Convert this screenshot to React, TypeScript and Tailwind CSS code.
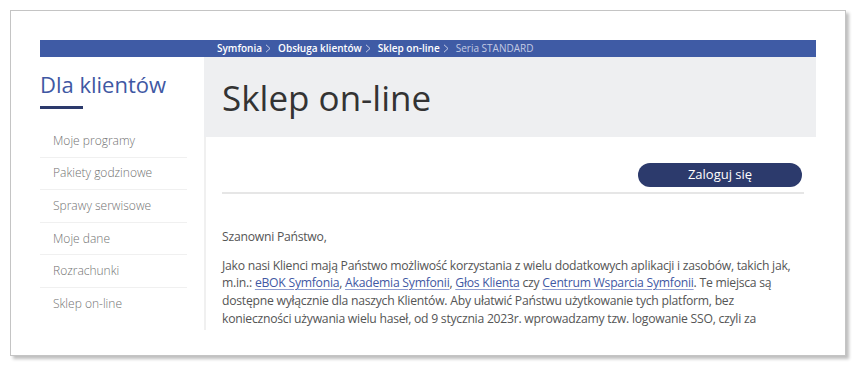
const menu = [
  "Moje programy",
  "Pakiety godzinowe",
  "Sprawy serwisowe",
  "Moje dane",
  "Rozrachunki",
  "Sklep on-line",
];

const Chevron = () => (
  <svg width="6" height="9" viewBox="0 0 6 9" className="ml-[3px] mr-[7px] shrink-0">
    <polyline points="1,0.8 5,4.5 1,8.2" fill="none" stroke="#d5daee" strokeWidth="0.9" />
  </svg>
);

const Crumb = ({ label, last }: { label: string; last?: boolean }) => (
  <span className="flex items-center">
    <span className={last ? "text-[#c3cae3]" : "font-semibold text-white"}>{label}</span>
    {!last && <Chevron />}
  </span>
);

const A = ({ children }: { children: string }) => (
  <a className="text-[#3f58a3] underline decoration-[#8d9bd0] underline-offset-2">{children}</a>
);

export default function App() {
  return (
    <div className="w-[856px] h-[370px] bg-white font-['Open_Sans',sans-serif] pt-[10px] pl-[10px]">
      <div className="w-[836px] h-[346px] border border-[#c4c4c4] shadow-[3px_3px_3px_rgba(0,0,0,0.25)] bg-white pt-[29px] pl-[29px]">
        <div className="w-[776px] h-[290px] overflow-hidden flex flex-col">
          <div className="h-[17px] shrink-0 bg-[#3f5ba5] flex items-center pl-[177px] text-[10px] leading-[17px] whitespace-nowrap">
            <Crumb label="Symfonia" />
            <Crumb label="Obsługa klientów" />
            <Crumb label="Sklep on-line" />
            <Crumb label="Seria STANDARD" last />
          </div>
          <div className="flex flex-1 min-h-0">
            <aside className="w-[164px] shrink-0 pt-[12px]">
              <h2 className="text-[22px] leading-[30px] text-[#3f58a3] whitespace-nowrap">Dla klientów</h2>
              <div className="w-[43px] h-[3px] bg-[#2c3a6c] mt-[7px]" />
              <ul className="mt-[16px] w-[147px]">
                {menu.map((m, i) => (
                  <li
                    key={m}
                    className={`h-[32.6px] flex items-center pl-[13px] text-[12px] font-light text-[#727272] ${i < menu.length - 1 ? "border-b border-[#f0f0f0]" : ""}`}
                  >
                    {m}
                  </li>
                ))}
              </ul>
            </aside>
            <main className="flex-1 flex flex-col">
              <div className="h-[80px] shrink-0 bg-[#eeeff1] pl-[18px] flex items-center">
                <h1 className="text-[35px] leading-none text-[#333]">Sklep on-line</h1>
              </div>
              <div className="flex-1 border-l-2 border-[#f0f0f0] pl-[16px] pr-[12px]">
                <div className="flex justify-end pt-[26px] pb-[5px] border-b-2 border-[#e6e6e6]">
                  <button className="w-[164px] h-[24px] rounded-full bg-[#2c3a6c] text-white text-[13px] mr-[2px]">
                    Zaloguj się
                  </button>
                </div>
                <div className="text-[12.2px] tracking-[-0.25px] leading-[17.7px] text-[#555] pt-[34px] pr-[6px]">
                  <p>Szanowni Państwo,</p>
                  <p className="mt-[11px]">
                    Jako nasi Klienci mają Państwo możliwość korzystania z wielu dodatkowych aplikacji i zasobów, takich jak, m.in.:{" "}
                    <A>eBOK Symfonia</A>, <A>Akademia Symfonii</A>, <A>Głos Klienta</A> czy <A>Centrum Wsparcia Symfonii</A>. Te miejsca są
                    dostępne wyłącznie dla naszych Klientów. Aby ułatwić Państwu użytkowanie tych platform, bez konieczności używania wielu
                    haseł, od 9 stycznia 2023r. wprowadzamy tzw. logowanie SSO, czyli za pomocą jednego konta.
                  </p>
                </div>
              </div>
            </main>
          </div>
        </div>
      </div>
    </div>
  );
}
